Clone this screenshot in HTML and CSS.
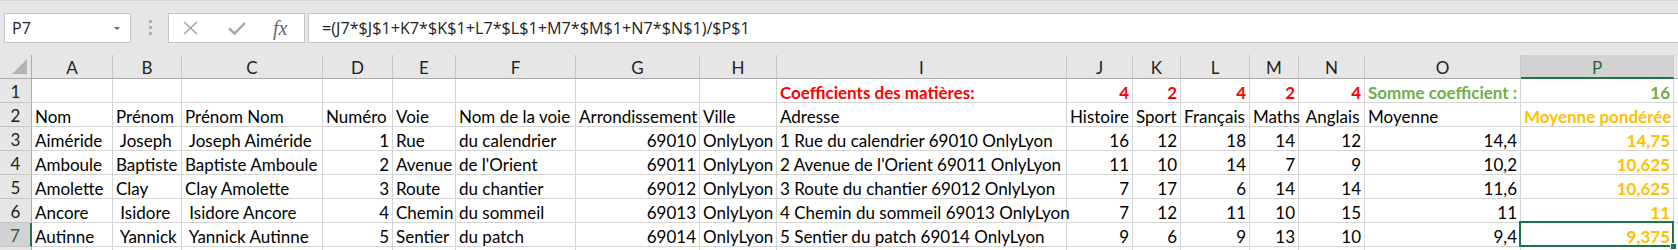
FILE: index.html
```html
<!DOCTYPE html>
<html lang="fr">
<head>
  <meta charset="UTF-8">
  <title>Moyennes pondérées</title>
  <link rel="stylesheet" href="styles.css">
</head>
<body>
  <!-- Formula bar -->
  <div class="bar">
    <div class="namebox"><span>P7</span><span class="arrow"></span></div>
    <div class="dots"><i></i><i></i><i></i></div>
    <div class="fnbox">
      <svg class="ico-x" width="15" height="14" viewBox="0 0 15 14"><path d="M1 1 L14 13 M14 1 L1 13" /></svg>
      <svg class="ico-ok" width="18" height="13" viewBox="0 0 18 13"><path d="M1 6.5 L6.5 11.5 L17 1" /></svg>
      <span class="fx">fx</span>
    </div>
    <div class="formula">=(J7*$J$1+K7*$K$1+L7*$L$1+M7*$M$1+N7*$N$1)/$P$1</div>
  </div>

  <!-- Sheet -->
  <div class="sheet">
    <div class="corner"><span class="tri"></span></div>
    <div class="hd">A</div><div class="hd">B</div><div class="hd">C</div><div class="hd">D</div>
    <div class="hd">E</div><div class="hd">F</div><div class="hd">G</div><div class="hd">H</div>
    <div class="hd">I</div><div class="hd">J</div><div class="hd">K</div><div class="hd">L</div>
    <div class="hd">M</div><div class="hd">N</div><div class="hd">O</div><div class="hd on">P</div>
    <div class="hd last"></div>

    <!-- row 1 -->
    <div class="rh">1</div>
    <div class="c"></div><div class="c"></div><div class="c"></div><div class="c"></div>
    <div class="c"></div><div class="c"></div><div class="c"></div><div class="c"></div>
    <div class="c red">Coefficients des matières:</div>
    <div class="c n red">4</div><div class="c n red">2</div><div class="c n red">4</div>
    <div class="c n red">2</div><div class="c n red">4</div>
    <div class="c green">Somme coefficient :</div>
    <div class="c n green">16</div>
    <div class="c last"></div>

    <!-- row 2 -->
    <div class="rh">2</div>
    <div class="c">Nom</div><div class="c">Prénom</div><div class="c">Prénom Nom</div>
    <div class="c">Numéro</div><div class="c">Voie</div><div class="c">Nom de la voie</div>
    <div class="c">Arrondissement</div><div class="c">Ville</div><div class="c">Adresse</div>
    <div class="c">Histoire</div><div class="c">Sport</div><div class="c">Français</div>
    <div class="c">Maths</div><div class="c"> Anglais</div><div class="c">Moyenne</div>
    <div class="c gold">Moyenne pondérée</div>
    <div class="c last"></div>

    <!-- row 3 -->
    <div class="rh">3</div>
    <div class="c">Aiméride</div><div class="c"> Joseph</div><div class="c"> Joseph Aiméride</div>
    <div class="c n">1</div><div class="c">Rue</div><div class="c">du calendrier</div>
    <div class="c n">69010</div><div class="c">OnlyLyon</div><div class="c">1 Rue du calendrier 69010 OnlyLyon</div>
    <div class="c n">16</div><div class="c n">12</div><div class="c n">18</div>
    <div class="c n">14</div><div class="c n">12</div><div class="c n">14,4</div>
    <div class="c n gold">14,75</div>
    <div class="c last"></div>

    <!-- row 4 -->
    <div class="rh">4</div>
    <div class="c">Amboule</div><div class="c">Baptiste</div><div class="c">Baptiste Amboule</div>
    <div class="c n">2</div><div class="c">Avenue</div><div class="c">de l'Orient</div>
    <div class="c n">69011</div><div class="c">OnlyLyon</div><div class="c">2 Avenue de l'Orient 69011 OnlyLyon</div>
    <div class="c n">11</div><div class="c n">10</div><div class="c n">14</div>
    <div class="c n">7</div><div class="c n">9</div><div class="c n">10,2</div>
    <div class="c n gold">10,625</div>
    <div class="c last"></div>

    <!-- row 5 -->
    <div class="rh">5</div>
    <div class="c">Amolette</div><div class="c">Clay</div><div class="c">Clay Amolette</div>
    <div class="c n">3</div><div class="c">Route</div><div class="c">du chantier</div>
    <div class="c n">69012</div><div class="c">OnlyLyon</div><div class="c">3 Route du chantier 69012 OnlyLyon</div>
    <div class="c n">7</div><div class="c n">17</div><div class="c n">6</div>
    <div class="c n">14</div><div class="c n">14</div><div class="c n">11,6</div>
    <div class="c n gold">10,625</div>
    <div class="c last"></div>

    <!-- row 6 -->
    <div class="rh">6</div>
    <div class="c">Ancore</div><div class="c"> Isidore</div><div class="c"> Isidore Ancore</div>
    <div class="c n">4</div><div class="c">Chemin</div><div class="c">du sommeil</div>
    <div class="c n">69013</div><div class="c">OnlyLyon</div><div class="c">4 Chemin du sommeil 69013 OnlyLyon</div>
    <div class="c n">7</div><div class="c n">12</div><div class="c n">11</div>
    <div class="c n">10</div><div class="c n">15</div><div class="c n">11</div>
    <div class="c n gold">11</div>
    <div class="c last"></div>

    <!-- row 7 -->
    <div class="rh on">7</div>
    <div class="c">Autinne</div><div class="c"> Yannick</div><div class="c"> Yannick Autinne</div>
    <div class="c n">5</div><div class="c">Sentier</div><div class="c">du patch</div>
    <div class="c n">69014</div><div class="c">OnlyLyon</div><div class="c">5 Sentier du patch 69014 OnlyLyon</div>
    <div class="c n">9</div><div class="c n">6</div><div class="c n">9</div>
    <div class="c n">13</div><div class="c n">10</div><div class="c n">9,4</div>
    <div class="c n gold sel">9,375</div>
    <div class="c last"></div>

    <!-- row 8, only its top edge shows -->
    <div class="rh"></div>
    <div class="c"></div><div class="c"></div><div class="c"></div><div class="c"></div>
    <div class="c"></div><div class="c"></div><div class="c"></div><div class="c"></div>
    <div class="c"></div><div class="c"></div><div class="c"></div><div class="c"></div>
    <div class="c"></div><div class="c"></div><div class="c"></div><div class="c"></div>
    <div class="c last"></div>
  </div>
</body>
</html>
```

FILE: styles.css
```css
body {
  margin: 0;
  width: 1678px;
  height: 250px;
  overflow: hidden;
  background: #fff;
  font-family: Lato, sans-serif;
}

/* formula bar */
.bar {
  height: 55px;
  box-sizing: border-box;
  background: #e6e6e6;
  border-top: 1px solid #d4d4d4;
  padding-top: 12px;
  display: flex;
  align-items: flex-start;
}
.namebox {
  margin-left: 4px;
  width: 127px;
  height: 30px;
  box-sizing: border-box;
  background: #fff;
  border: 1px solid #c6c6c6;
  padding: 0 10px 0 7px;
  display: flex;
  align-items: center;
  justify-content: space-between;
  font-family: "Open Sans", sans-serif;
  font-size: 16px;
  color: #222;
}
.arrow {
  width: 0;
  height: 0;
  border-left: 3px solid transparent;
  border-right: 3px solid transparent;
  border-top: 3px solid #6a6a6a;
}
.dots {
  margin: 7px 0 0 18px;
  display: flex;
  flex-direction: column;
  gap: 3px;
}
.dots i {
  width: 3px;
  height: 3px;
  background: #b0b0b0;
}
.fnbox {
  margin-left: 16px;
  width: 137px;
  height: 30px;
  box-sizing: border-box;
  background: #fff;
  border: 1px solid #c6c6c6;
  padding-left: 14px;
  display: flex;
  align-items: center;
}
.ico-x path {
  stroke: #a6a6a6;
  stroke-width: 1.6;
  fill: none;
}
.ico-ok {
  margin-left: 30px;
}
.ico-ok path {
  stroke: #a6a6a6;
  stroke-width: 2.4;
  fill: none;
}
.fx {
  margin-left: 27px;
  font-family: "Liberation Serif", serif;
  font-style: italic;
  font-size: 20px;
  color: #666;
}
.formula {
  flex: 1;
  margin-left: 3px;
  height: 30px;
  box-sizing: border-box;
  background: #fff;
  border: 1px solid #c6c6c6;
  border-right: none;
  padding-left: 13px;
  display: flex;
  align-items: center;
  font-family: "Open Sans", sans-serif;
  font-size: 16.2px;
  color: #222;
}

/* grid */
.sheet {
  display: grid;
  grid-template-columns: 32px 81px 69px 141px 70px 63px 120px 124px 77px 290px 66px 48px 69px 49px 66px 156px 153px 1fr;
  grid-auto-rows: 24px;
  font-size: 17px;
}
.corner {
  position: relative;
  background: #e6e6e6;
  border-right: 1px solid #ababab;
  border-bottom: 1px solid #ababab;
}
.tri {
  position: absolute;
  right: 4px;
  bottom: 4px;
  width: 0;
  height: 0;
  border-left: 15px solid transparent;
  border-bottom: 15px solid #b4b4b4;
}
.hd {
  background: #e6e6e6;
  border-right: 1px solid #c6c6c6;
  border-bottom: 1px solid #ababab;
  display: flex;
  align-items: center;
  justify-content: center;
  padding-top: 2px;
  color: #222;
}
.hd.on {
  background: #d2d2d2;
  border-bottom: 2px solid #217346;
  color: #1e6a40;
}
.hd.last {
  border-right: none;
}
.rh {
  background: #e6e6e6;
  border-right: 1px solid #ababab;
  border-bottom: 1px solid #c6c6c6;
  display: flex;
  align-items: center;
  justify-content: center;
  padding-top: 1px;
  color: #222;
}
.rh.on {
  background: #d2d2d2;
  border-right: 2px solid #217346;
  color: #1e6a40;
}
.c {
  border-right: 1px solid #d4d4d4;
  border-bottom: 1px solid #d4d4d4;
  padding: 0 3px;
  display: flex;
  align-items: flex-end;
  line-height: 18px;
  white-space: pre;
  color: #000;
}
.c.last {
  border-right: none;
}
.n {
  justify-content: flex-end;
}
.red {
  color: #ff0000;
  font-weight: bold;
}
.green {
  color: #70ad47;
  font-weight: bold;
}
.gold {
  color: #ffc000;
  font-weight: bold;
}

/* active cell */
.sel {
  position: relative;
}
.sel::before {
  content: "";
  position: absolute;
  left: -2px;
  top: -2px;
  right: -1px;
  bottom: -1px;
  border: 2px solid #217346;
}
.sel::after {
  content: "";
  position: absolute;
  right: -4px;
  bottom: -4px;
  width: 5px;
  height: 5px;
  background: #217346;
  border: 1px solid #fff;
}
```
